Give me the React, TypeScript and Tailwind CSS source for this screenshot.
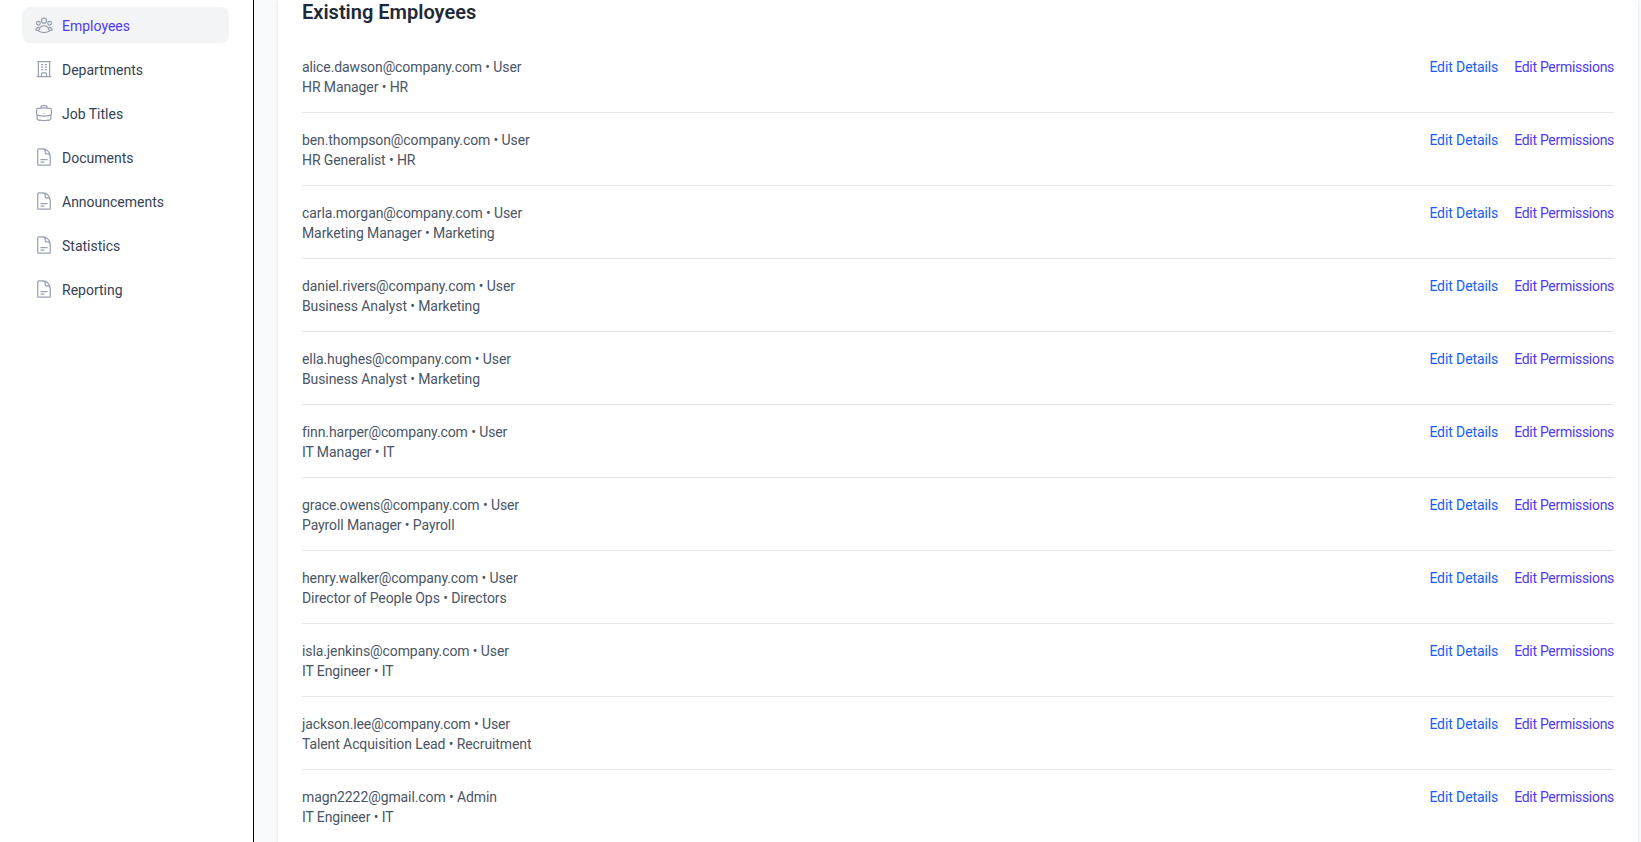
import { HiOutlineBuildingOffice, HiOutlineBriefcase, HiOutlineDocumentText, HiOutlineUserGroup } from 'react-icons/hi2';
import type { IconType } from 'react-icons';

const navItems: { label: string; icon: IconType; active?: boolean }[] = [
  { label: 'Employees', icon: HiOutlineUserGroup, active: true },
  { label: 'Departments', icon: HiOutlineBuildingOffice },
  { label: 'Job Titles', icon: HiOutlineBriefcase },
  { label: 'Documents', icon: HiOutlineDocumentText },
  { label: 'Announcements', icon: HiOutlineDocumentText },
  { label: 'Statistics', icon: HiOutlineDocumentText },
  { label: 'Reporting', icon: HiOutlineDocumentText },
];

const employees = [
  { email: 'alice.dawson@company.com', role: 'User', title: 'HR Manager', dept: 'HR' },
  { email: 'ben.thompson@company.com', role: 'User', title: 'HR Generalist', dept: 'HR' },
  { email: 'carla.morgan@company.com', role: 'User', title: 'Marketing Manager', dept: 'Marketing' },
  { email: 'daniel.rivers@company.com', role: 'User', title: 'Business Analyst', dept: 'Marketing' },
  { email: 'ella.hughes@company.com', role: 'User', title: 'Business Analyst', dept: 'Marketing' },
  { email: 'finn.harper@company.com', role: 'User', title: 'IT Manager', dept: 'IT' },
  { email: 'grace.owens@company.com', role: 'User', title: 'Payroll Manager', dept: 'Payroll' },
  { email: 'henry.walker@company.com', role: 'User', title: 'Director of People Ops', dept: 'Directors' },
  { email: 'isla.jenkins@company.com', role: 'User', title: 'IT Engineer', dept: 'IT' },
  { email: 'jackson.lee@company.com', role: 'User', title: 'Talent Acquisition Lead', dept: 'Recruitment' },
  { email: 'magn2222@gmail.com', role: 'Admin', title: 'IT Engineer', dept: 'IT' },
];

export default function App() {
  return (
    <div className="flex h-screen overflow-hidden bg-gray-50 font-['Roboto',sans-serif]">
      {/* Sidebar */}
      <aside className="w-[254px] shrink-0 border-r border-black bg-white px-[22px] pt-[7px]">
        <nav className="flex w-[207px] flex-col gap-2">
          {navItems.map((item) => {
            const Icon = item.icon;
            return (
              <a
                key={item.label}
                className={`flex h-9 items-center gap-2 rounded-lg px-3 text-sm ${
                  item.active ? 'bg-gray-100 text-indigo-600' : 'text-gray-700'
                }`}
              >
                <Icon className="h-5 w-5 text-gray-400" />
                <span className="pt-0.5">{item.label}</span>
              </a>
            );
          })}
        </nav>
      </aside>

      {/* Main */}
      <main className="min-w-0 flex-1 pl-6 pr-[3px]">
        <div className="bg-white px-6 shadow">
          <h2 className="mb-4 text-xl leading-6 font-semibold text-gray-800">Existing Employees</h2>
          <ul className="divide-y divide-gray-200">
            {employees.map((emp) => (
              <li key={emp.email} className="flex items-start justify-between pt-[17px] pb-[15px]">
                <div className="text-sm leading-5 tracking-[-0.1px] text-gray-600">
                  <p>
                    {emp.email} • {emp.role}
                  </p>
                  <p>
                    {emp.title} • {emp.dept}
                  </p>
                </div>
                <div className="flex gap-4 text-sm leading-5">
                  <button className="tracking-[-0.1px] text-blue-600">Edit Details</button>
                  <button className="tracking-[-0.3px] text-indigo-600">Edit Permissions</button>
                </div>
              </li>
            ))}
          </ul>
        </div>
      </main>
    </div>
  );
}
